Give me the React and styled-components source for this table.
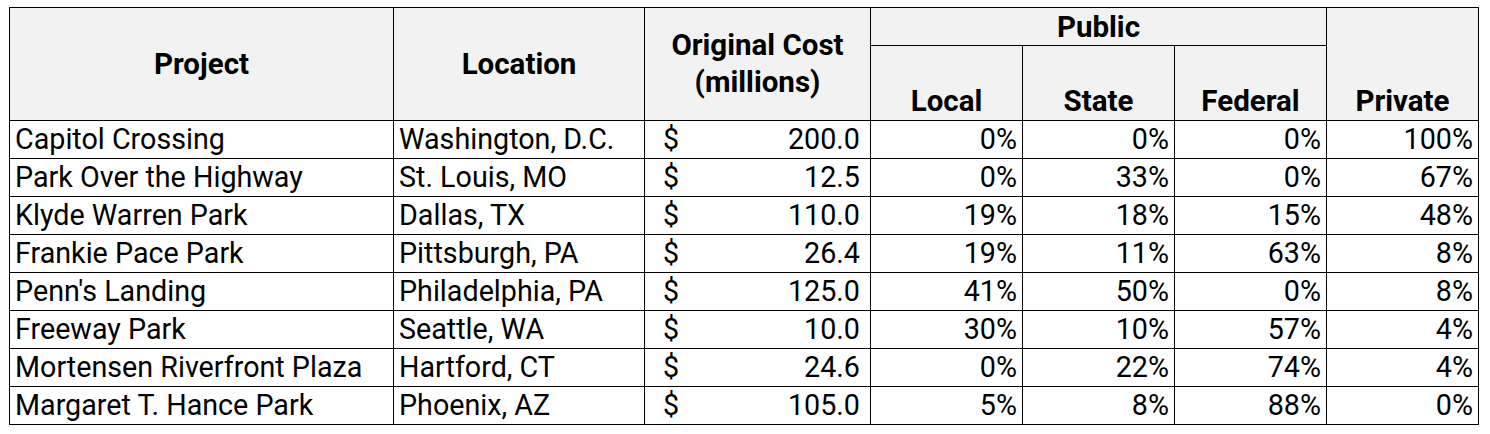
import React from "react";
import styled, { createGlobalStyle } from "styled-components";

const Global = createGlobalStyle`
  html, body { margin: 0; padding: 0; background: #ffffff; }
  body { font-family: Roboto, "Liberation Sans", Arial, sans-serif; color: #000; }
`;

const Page = styled.div`
  padding: 7px 0 0 9px;
`;

const Table = styled.table`
  border-collapse: collapse;
  table-layout: fixed;
  width: 1469px;
  font-family: Roboto, "Liberation Sans", Arial, sans-serif;
  font-size: 28.7px;
  color: #000;
`;

const HeadRow = styled.tr`
  height: ${(p) => p.$h}px;
`;

const Th = styled.th`
  background: #f2f2f2;
  border: 1px solid #000;
  font-weight: 700;
  font-size: 29.5px;
  text-align: center;
  vertical-align: ${(p) => p.$valign || "middle"};
  padding: 0 2px ${(p) => (p.$valign === "bottom" ? "2px" : "0")};
  line-height: ${(p) => p.$lh || "normal"};
  white-space: nowrap;
  overflow: hidden;
`;

const Row = styled.tr`
  height: 38px;
`;

const Td = styled.td`
  border: 1px solid #000;
  background: #fff;
  padding: 0 5px;
  text-align: ${(p) => p.$align || "left"};
  vertical-align: middle;
  white-space: nowrap;
  overflow: hidden;
  line-height: 1;
`;

const MoneyCell = styled.td`
  border: 1px solid #000;
  background: #fff;
  padding: 0 10px 0 18px;
  vertical-align: middle;
  line-height: 1;
`;

const Money = styled.div`
  display: flex;
  justify-content: space-between;
  align-items: baseline;
`;

const data = [
  ["Capitol Crossing", "Washington, D.C.", "200.0", "0%", "0%", "0%", "100%"],
  ["Park Over the Highway", "St. Louis, MO", "12.5", "0%", "33%", "0%", "67%"],
  ["Klyde Warren Park", "Dallas, TX", "110.0", "19%", "18%", "15%", "48%"],
  ["Frankie Pace Park", "Pittsburgh, PA", "26.4", "19%", "11%", "63%", "8%"],
  ["Penn's Landing", "Philadelphia, PA", "125.0", "41%", "50%", "0%", "8%"],
  ["Freeway Park", "Seattle, WA", "10.0", "30%", "10%", "57%", "4%"],
  ["Mortensen Riverfront Plaza", "Hartford, CT", "24.6", "0%", "22%", "74%", "4%"],
  ["Margaret T. Hance Park", "Phoenix, AZ", "105.0", "5%", "8%", "88%", "0%"],
];

const widths = [384, 251, 226, 152, 152, 152, 152];

export default function App() {
  return (
    <Page>
      <Global />
      <Table>
        <colgroup>
          {widths.map((w, i) => (
            <col key={i} style={{ width: w }} />
          ))}
        </colgroup>
        <thead>
          <HeadRow $h={38}>
            <Th rowSpan={2}>Project</Th>
            <Th rowSpan={2}>Location</Th>
            <Th rowSpan={2} $lh="37px">
              Original Cost
              <br />
              (millions)
            </Th>
            <Th colSpan={3}>Public</Th>
            <Th rowSpan={2} $valign="bottom">
              Private
            </Th>
          </HeadRow>
          <HeadRow $h={75}>
            <Th $valign="bottom">Local</Th>
            <Th $valign="bottom">State</Th>
            <Th $valign="bottom">Federal</Th>
          </HeadRow>
        </thead>
        <tbody>
          {data.map((r) => (
            <Row key={r[0]}>
              <Td>{r[0]}</Td>
              <Td>{r[1]}</Td>
              <MoneyCell>
                <Money>
                  <span>$</span>
                  <span>{r[2]}</span>
                </Money>
              </MoneyCell>
              <Td $align="right">{r[3]}</Td>
              <Td $align="right">{r[4]}</Td>
              <Td $align="right">{r[5]}</Td>
              <Td $align="right">{r[6]}</Td>
            </Row>
          ))}
        </tbody>
      </Table>
    </Page>
  );
}
